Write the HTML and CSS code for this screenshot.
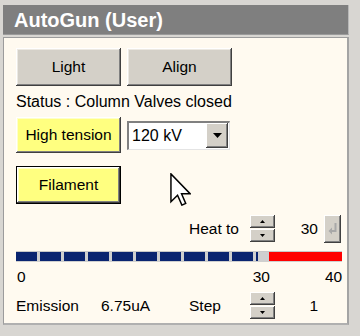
FILE: index.html
```html
<!DOCTYPE html>
<html>
<head>
<meta charset="utf-8">
<link rel="stylesheet" href="styles.css">
</head>
<body>
<div class="window">
  <div class="title">AutoGun (User)</div>
  <div class="panel">
    <div class="row r-buttons">
      <div class="btn big">Light</div>
      <div class="btn big">Align</div>
    </div>
    <div class="status">Status : Column Valves closed</div>
    <div class="row r-ht">
      <div class="btn big yellow">High tension</div>
      <div class="combo">
        <span class="combo-val">120 kV</span>
        <span class="combo-btn"><svg width="9" height="5" viewBox="0 0 9 5"><path d="M0 0H9L4.5 5Z" fill="#000"/></svg></span>
      </div>
    </div>
    <div class="row r-fil">
      <div class="btn big yellow default">Filament</div>
    </div>
    <div class="row r-heat">
      <span class="lbl heat-lbl">Heat to</span>
      <div class="spin">
        <div class="spin-b"><svg width="5" height="3" viewBox="0 0 5 3"><path d="M0 3H5L2.5 0Z" fill="#000"/></svg></div>
        <div class="spin-b"><svg width="5" height="3" viewBox="0 0 5 3"><path d="M0 0H5L2.5 3Z" fill="#000"/></svg></div>
      </div>
      <span class="val heat-val">30</span>
      <div class="enter"><svg width="10" height="13" viewBox="0 0 10 13"><path d="M7.5 1V9H3" fill="none" stroke="#a8a8a8" stroke-width="2"/><path d="M0.5 9L4 5.5V12.5Z" fill="#a8a8a8"/></svg></div>
    </div>
    <div class="bar">
      <div class="bar-blue"></div>
      <div class="bar-red"></div>
    </div>
    <div class="row r-scale">
      <span class="s0">0</span>
      <span class="s30">30</span>
      <span class="s40">40</span>
    </div>
    <div class="row r-em">
      <span class="lbl em-lbl">Emission</span>
      <span class="em-val">6.75uA</span>
      <span class="lbl step-lbl">Step</span>
      <div class="spin">
        <div class="spin-b"><svg width="5" height="3" viewBox="0 0 5 3"><path d="M0 3H5L2.5 0Z" fill="#000"/></svg></div>
        <div class="spin-b"><svg width="5" height="3" viewBox="0 0 5 3"><path d="M0 0H5L2.5 3Z" fill="#000"/></svg></div>
      </div>
      <span class="val step-val">1</span>
    </div>
    <svg class="cursor" width="21" height="33" viewBox="0 0 12 19"><path d="M0.5 0.5V16.5L4.3 12.8L6.8 18.5L9 17.5L6.6 11.9H11.5Z" fill="#fff" stroke="#000" stroke-width="0.85" stroke-linejoin="miter"/></svg>
  </div>
</div>
</body>
</html>
```
FILE: styles.css
```css
html, body {
  margin: 0;
  padding: 0;
}
body {
  width: 360px;
  height: 336px;
  background: #d8d6d2;
  font-family: "Liberation Sans", Arial, sans-serif;
  font-size: 15.5px;
  color: #000;
  overflow: hidden;
}
.window {
  padding: 5px 0 0 3px;
  width: 346px;
}
.title {
  height: 30px;
  width: 346px;
  background: #7f7f7f;
  color: #fff;
  font-weight: bold;
  font-size: 20px;
  line-height: 31px;
  padding-left: 11px;
  box-sizing: border-box;
  border-right: 1px solid #b8b8b8;
  border-bottom: 1px solid #9a9a9a;
}
.panel {
  position: relative;
  margin-top: 2px;
  width: 346px;
  height: 288px;
  box-sizing: border-box;
  background: #fffaf0;
  border-top: 1px solid #9c9c9c;
  border-left: 1px solid #9c9c9c;
  border-right: 2px solid #a4a4a4;
  border-bottom: 2px solid #b0b0b0;
  padding: 10px 0 0 12px;
  display: flex;
  flex-direction: column;
}
.row {
  display: flex;
  align-items: center;
}
.btn {
  display: flex;
  align-items: center;
  justify-content: center;
  background: #d4d0c8;
  box-shadow: inset -1px -1px #404040, inset 1px 1px #ffffff, inset -2px -2px #808080, inset 2px 2px #ece9e2;
  box-sizing: border-box;
}
.big {
  width: 105px;
  height: 38px;
}
.r-buttons {
  gap: 6px;
}
.status {
  margin-top: 7px;
  height: 17px;
  line-height: 17px;
  font-size: 16px;
}
.r-ht {
  margin-top: 7px;
  gap: 6px;
}
.r-ht .btn {
  height: 36px;
}
.yellow {
  background: #ffff80;
  box-shadow: inset -1px -1px #404040, inset 1px 1px #ffffff, inset -2px -2px #808080, inset 2px 2px #ffffc8;
}
.default {
  border: 1px solid #000;
}
.combo {
  width: 103px;
  height: 29px;
  box-sizing: border-box;
  background: #fff;
  border-top: 2px solid #808080;
  border-left: 2px solid #808080;
  border-right: 1px solid #e4e4e4;
  border-bottom: 1px solid #e4e4e4;
  display: flex;
  align-items: center;
  justify-content: space-between;
}
.combo-val {
  padding-left: 3px;
  font-size: 16px;
}
.combo-btn {
  width: 22px;
  height: 25px;
  margin-right: 1px;
  background: #d4d0c8;
  box-shadow: inset -1px -1px #404040, inset 1px 1px #ffffff, inset -2px -2px #808080;
  display: flex;
  align-items: center;
  justify-content: center;
}
.r-fil {
  margin-top: 13px;
}
.r-fil .btn {
  height: 38px;
}
.r-heat {
  margin-top: 10px;
  height: 29px;
}
.heat-lbl {
  margin-left: 173px;
  width: 52px;
}
.spin {
  display: flex;
  flex-direction: column;
  gap: 1px;
  width: 25px;
  margin-left: 9px;
}
.spin-b {
  height: 13px;
  background: #d4d0c8;
  box-shadow: inset -1px -1px #404040, inset 1px 1px #ffffff, inset -2px -2px #808080;
  display: flex;
  align-items: center;
  justify-content: center;
}
.heat-val {
  width: 43px;
  text-align: right;
}
.enter {
  width: 17px;
  height: 28px;
  margin-left: 6px;
  background: #d4d0c8;
  box-shadow: inset -1px -1px #404040, inset 1px 1px #ffffff, inset -2px -2px #808080;
  display: flex;
  align-items: center;
  justify-content: center;
}
.bar {
  margin-top: 8px;
  width: 326px;
  height: 10px;
  display: flex;
  background: #cfcfcf;
  border-top: 1px solid #c8c8c8;
}
.bar-blue {
  width: 242px;
  height: 9px;
  background: repeating-linear-gradient(90deg, #0a2470 0 21px, #cfcfcf 21px 24px);
}
.bar-red {
  margin-left: 11px;
  width: 73px;
  height: 9px;
  background: #ff0000;
}
.r-scale {
  margin-top: 6px;
  height: 17px;
}
.s0 {
  margin-left: 1px;
}
.s30 {
  margin-left: 227px;
}
.s40 {
  margin-left: 55px;
}
.r-em {
  margin-top: 6px;
  height: 29px;
}
.em-lbl {
  width: 85px;
}
.em-val {
  width: 88px;
}
.step-lbl {
  width: 52px;
}
.step-val {
  width: 43px;
  text-align: right;
}
.cursor {
  position: absolute;
  left: 166px;
  top: 135px;
}
```
